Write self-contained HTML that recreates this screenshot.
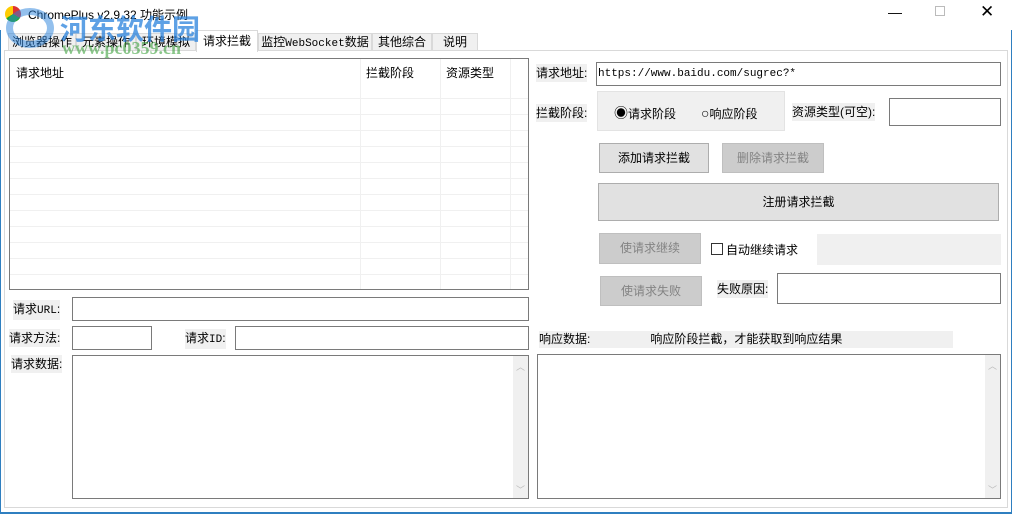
<!DOCTYPE html>
<html><head><meta charset="utf-8"><style>
*{margin:0;padding:0;box-sizing:border-box}
body{width:1012px;height:514px;overflow:hidden;background:#fff;position:relative;font-family:"Liberation Sans","Noto Sans CJK SC","WenQuanYi Zen Hei",sans-serif;font-size:12px;color:#000}
.a{position:absolute}
.box{position:absolute;background:#fff;border:1px solid #7a7a7a}
.lbl{position:absolute;background:#f0f0f0;line-height:18px;white-space:nowrap}
.btn{position:absolute;background:#e1e1e1;border:1px solid #adadad;text-align:center}
.dis{background:#ccc;border-color:#bfbfbf;color:#838383}
.mono{font-family:"Liberation Mono","Noto Sans CJK SC",monospace;font-size:11px}
.tab{position:absolute;top:33px;height:18px;border:1px solid #d9d9d9;border-bottom:none;background:#f0f0f0;line-height:16px;padding:0 2px;font-size:12px;white-space:nowrap;overflow:hidden;text-align:center}
.sb{position:absolute;right:0;top:0;bottom:0;width:15px;background:#f0f0f0;color:#bbb;font-size:9px;text-align:center}
</style></head><body>
<div class="a" style="left:5px;top:6px;width:16px;height:16px;border-radius:50%;background:conic-gradient(#d33 0 33%,#2a2 0 66%,#fc0 0)"></div>
<div class="a" style="left:28px;top:6px;font-size:12px;color:#000">ChromePlus v2.9.32 功能示例</div>
<div class="a" style="left:888px;top:4px;font-size:14px;color:#000">—</div>
<div class="a" style="left:935px;top:6px;width:10px;height:10px;border:1px solid #bbb"></div>
<div class="a" style="left:980px;top:2px;font-size:17px">✕</div>
<div class="a" style="left:0;top:30px;width:1px;height:484px;background:#2f7fc0"></div>
<div class="a" style="left:1011px;top:30px;width:1px;height:484px;background:#2f7fc0"></div>
<div class="a" style="left:0;top:512px;width:1012px;height:2px;background:#2f7fc0"></div>
<div class="tab" style="left:8px;width:68px">浏览器操作</div>
<div class="tab" style="left:76px;width:60px">元素操作</div>
<div class="tab" style="left:136px;width:60px">环境模拟</div>
<div class="tab" style="left:196px;top:30px;height:22px;width:62px;background:#fff;line-height:20px;z-index:2">请求拦截</div>
<div class="tab" style="left:258px;width:114px">监控<span class="mono">WebSocket</span>数据</div>
<div class="tab" style="left:372px;width:60px">其他综合</div>
<div class="tab" style="left:432px;width:46px">说明</div>
<div class="a" style="left:4px;top:50px;width:1004px;height:458px;background:#fff;border:1px solid #d9d9d9"></div>
<div class="box" style="left:9px;top:58px;width:520px;height:232px;overflow:hidden">
 <div class="a" style="left:6px;top:5px">请求地址</div>
 <div class="a" style="left:356px;top:5px">拦截阶段</div>
 <div class="a" style="left:436px;top:5px">资源类型</div>
 <div class="a" style="left:350px;top:0;width:1px;height:232px;background:#f0f0f0"></div>
 <div class="a" style="left:430px;top:0;width:1px;height:232px;background:#f0f0f0"></div>
 <div class="a" style="left:500px;top:0;width:1px;height:232px;background:#f0f0f0"></div>
 <div class="a" style="left:0;top:39px;width:520px;height:200px;background:repeating-linear-gradient(to bottom,#f0f0f0 0 1px,#0000 1px 16px)"></div>
</div>
<div class="lbl" style="left:13px;top:300px">请求<span class="mono">URL</span>:</div>
<div class="box" style="left:72px;top:297px;width:457px;height:24px"></div>
<div class="lbl" style="left:9px;top:329px">请求方法:</div>
<div class="box" style="left:72px;top:326px;width:80px;height:24px"></div>
<div class="lbl" style="left:185px;top:329px">请求<span class="mono">ID</span>:</div>
<div class="box" style="left:235px;top:326px;width:294px;height:24px"></div>
<div class="lbl" style="left:11px;top:355px">请求数据:</div>
<div class="box" style="left:72px;top:355px;width:457px;height:144px"><div class="sb"><div style="margin-top:4px">︿</div><div style="position:absolute;bottom:2px;width:15px">﹀</div></div></div>
<div class="lbl" style="left:536px;top:64px">请求地址:</div>
<div class="box mono" style="left:596px;top:62px;width:405px;height:24px;line-height:22px;padding-left:1px">https://www.baidu.com/sugrec?*</div>
<div class="lbl" style="left:536px;top:104px">拦截阶段:</div>
<div class="a" style="left:597px;top:91px;width:188px;height:40px;background:#f0f0f0;border:1px solid #e3e3e3"></div>
<div class="a" style="left:614px;top:104px;line-height:18px"><span style="font-size:14px">◉</span>请求阶段</div>
<div class="a" style="left:701px;top:104px;line-height:18px"><span style="font-size:14px">○</span>响应阶段</div>
<div class="lbl" style="left:792px;top:103px">资源类型(可空):</div>
<div class="box" style="left:889px;top:98px;width:112px;height:28px"></div>
<div class="btn" style="left:599px;top:143px;width:110px;height:30px;line-height:28px">添加请求拦截</div>
<div class="btn dis" style="left:722px;top:143px;width:102px;height:30px;line-height:28px">删除请求拦截</div>
<div class="btn" style="left:598px;top:183px;width:401px;height:38px;line-height:36px">注册请求拦截</div>
<div class="btn dis" style="left:599px;top:233px;width:102px;height:31px;line-height:29px">使请求继续</div>
<div class="a" style="left:711px;top:243px;width:12px;height:12px;border:1px solid #333;background:#fff"></div>
<div class="a" style="left:726px;top:241px">自动继续请求</div>
<div class="a" style="left:817px;top:234px;width:184px;height:31px;background:#f0f0f0"></div>
<div class="btn dis" style="left:600px;top:276px;width:102px;height:30px;line-height:28px">使请求失败</div>
<div class="lbl" style="left:717px;top:280px">失败原因:</div>
<div class="box" style="left:777px;top:273px;width:224px;height:31px"></div>
<div class="lbl" style="left:539px;top:331px;width:414px;height:17px;line-height:17px">响应数据:<span style="margin-left:60px">响应阶段拦截，才能获取到响应结果</span></div>
<div class="box" style="left:537px;top:354px;width:464px;height:145px"><div class="sb"><div style="margin-top:4px">︿</div><div style="position:absolute;bottom:2px;width:15px">﹀</div></div></div>
<div class="a" style="left:6px;top:8px;width:48px;height:40px;border-radius:50%;border:7px solid rgba(40,130,220,.5);z-index:5"></div>
<div class="a" style="left:60px;top:8px;font-size:28px;font-weight:bold;color:rgba(40,130,220,.75);z-index:5">河东软件园</div>
<div class="a" style="left:62px;top:38px;font-size:18px;font-weight:bold;color:rgba(60,160,60,.6);font-family:'Liberation Serif',serif;z-index:5">www.pc0359.cn</div>
</body></html>
